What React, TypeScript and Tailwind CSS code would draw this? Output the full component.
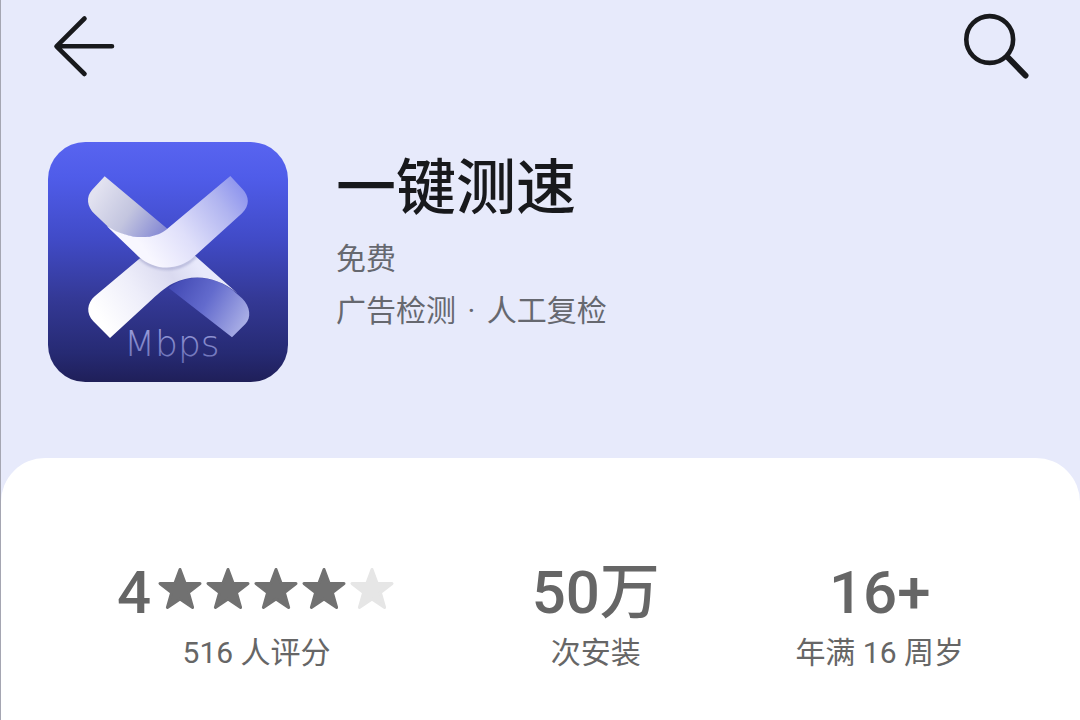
import React from "react";

const BackIcon = () => (
  <svg className="h-16 w-16" viewBox="0 0 64 64" fill="none" stroke="#18191c" strokeWidth="4.6" strokeLinecap="round" strokeLinejoin="round">
    <path d="M32.5 4.5 L4.5 32.3 L32.5 60 M5 32.3 H60" />
  </svg>
);

const SearchIcon = () => (
  <svg className="h-[68px] w-[68px]" viewBox="0 0 68 68" fill="none" stroke="#18191c" strokeLinecap="round">
    <circle cx="27.7" cy="27.5" r="23.4" strokeWidth="4.6" />
    <path d="M46 45.5 L63.5 63.5" strokeWidth="6" />
  </svg>
);

const AppLogo = () => (
  <svg className="h-60 w-60 shrink-0" viewBox="24 36 720 720" role="img" aria-label="一键测速">
    <defs>
      <linearGradient id="tile" x1="0" y1="0" x2="0" y2="1">
        <stop offset="0" stopColor="#5864f0" />
        <stop offset="0.15" stopColor="#4f5ce9" />
        <stop offset="0.4" stopColor="#414bc8" />
        <stop offset="0.65" stopColor="#343996" />
        <stop offset="0.88" stopColor="#262a73" />
        <stop offset="1" stopColor="#1f1f59" />
      </linearGradient>
      <linearGradient id="topLeft" gradientUnits="userSpaceOnUse" x1="170" y1="180" x2="370" y2="310">
        <stop offset="0" stopColor="#e2e2f0" />
        <stop offset="0.5" stopColor="#c3c5df" />
        <stop offset="1" stopColor="#8488d4" />
      </linearGradient>
      <linearGradient id="topRight" gradientUnits="userSpaceOnUse" x1="320" y1="370" x2="610" y2="160">
        <stop offset="0" stopColor="#f8f7ff" />
        <stop offset="0.35" stopColor="#dfdffa" />
        <stop offset="0.75" stopColor="#b0b4f0" />
        <stop offset="1" stopColor="#8a91ee" />
      </linearGradient>
      <linearGradient id="bottomLeft" gradientUnits="userSpaceOnUse" x1="190" y1="580" x2="470" y2="400">
        <stop offset="0" stopColor="#ffffff" />
        <stop offset="0.4" stopColor="#eeeefa" />
        <stop offset="0.75" stopColor="#dadaf0" />
        <stop offset="1" stopColor="#e8e9fb" />
      </linearGradient>
      <linearGradient id="bottomRight" gradientUnits="userSpaceOnUse" x1="400" y1="470" x2="610" y2="590">
        <stop offset="0" stopColor="#444bb5" />
        <stop offset="0.45" stopColor="#636bcd" />
        <stop offset="1" stopColor="#a9aee6" />
      </linearGradient>
      <linearGradient id="unit" x1="0" y1="0" x2="0" y2="1">
        <stop offset="0" stopColor="#a0a4e0" />
        <stop offset="1" stopColor="#686db4" />
      </linearGradient>
      <filter id="soft" x="-20%" y="-20%" width="140%" height="140%">
        <feGaussianBlur stdDeviation="5" />
      </filter>
    </defs>
    <rect x="24" y="36" width="720" height="720" rx="112" fill="url(#tile)" />

    {/* lower ribbon, folded at the right */}
    <path d="M386 474 C430 436 510 428 580 482 L606 505 C632 530 634 565 616 582 L576 622 Z" fill="url(#bottomRight)" />
    <path d="M300 385 L466 378 L592 490 C530 438 460 430 400 460 C372 474 350 496 330 514 L210 624 L160 574 C138 550 140 520 165 498 Z" fill="url(#bottomLeft)" />

    {/* upper ribbon, folded at the left */}
    <path d="M288 374 C340 428 420 430 470 376" fill="none" stroke="#555a9c" strokeWidth="5" opacity="0.5" filter="url(#soft)" />
    <path d="M194 139 L382 296 C350 330 270 330 212 298 L164 252 C140 230 138 200 156 180 Z" fill="url(#topLeft)" />
    <path d="M571 138 L608 178 C628 200 630 226 606 250 L460 382 C410 424 345 422 296 380 L200 288 C265 330 340 332 382 296 Z" fill="url(#topRight)" />

    <text x="252" y="678" fontFamily="'DejaVu Sans', 'DejaVu Sans Light', sans-serif" fontSize="108" fontWeight="200" fill="url(#unit)">Mbps</text>
  </svg>
);

const Star = ({ filled }: { filled: boolean }) => (
  <svg
    className={filled ? "h-12 w-12 text-[#717171]" : "h-12 w-12 text-[#e6e6e6]"}
    viewBox="0 0 48 48"
    fill="currentColor"
    stroke="currentColor"
    strokeWidth="3"
    strokeLinejoin="round"
  >
    <path d="M24 4.5 L29.2 18.5 H44 L32.4 27.6 L36.6 42.5 L24 34 L11.4 42.5 L15.6 27.6 L4 18.5 H18.8 Z" />
  </svg>
);

const App: React.FC = () => {
  return (
    <div className="flex min-h-screen flex-col border-l border-[#a5a6b2] bg-[#e7eafb] font-[Roboto,'Noto_Sans_CJK_SC',sans-serif] text-[#666666]">
      <header className="flex items-start justify-between pt-3 pr-[50px] pl-[51px]">
        <button aria-label="返回" className="pt-[2px]">
          <BackIcon />
        </button>
        <button aria-label="搜索">
          <SearchIcon />
        </button>
      </header>

      <section className="flex gap-12 px-12 pt-[62px] pb-[76px] -ml-px">
        <AppLogo />
        <div className="pt-[11px]">
          <h1 className="text-[60px] leading-[72px] font-medium text-[#18191c]">一键测速</h1>
          <p className="mt-2 text-[30px] leading-[52px] text-[#66686f]">免费</p>
          <p className="text-[30px] leading-[52px] text-[#66686f]">
            广告检测<span className="mx-1"> · </span>人工复检
          </p>
        </div>
      </section>

      <main className="flex grow items-start justify-between rounded-t-[44px] bg-white px-[116px] pt-[99px]">
        <div className="text-center">
          <div className="flex items-center gap-[5px]">
            <span className="text-[60px] leading-[72px] font-medium">4</span>
            <div className="flex pb-2" role="img" aria-label="4 / 5">
              {[1, 2, 3, 4, 5].map((n) => (
                <Star key={n} filled={n <= 4} />
              ))}
            </div>
          </div>
          <p className="text-[30px] leading-[48px]">516 人评分</p>
        </div>
        <div className="text-center">
          <p className="text-[60px] leading-[72px] font-medium">50万</p>
          <p className="text-[30px] leading-[48px]">次安装</p>
        </div>
        <div className="text-center">
          <p className="text-[60px] leading-[72px] font-medium">16+</p>
          <p className="text-[30px] leading-[48px]">年满 16 周岁</p>
        </div>
      </main>
    </div>
  );
};

export default App;
